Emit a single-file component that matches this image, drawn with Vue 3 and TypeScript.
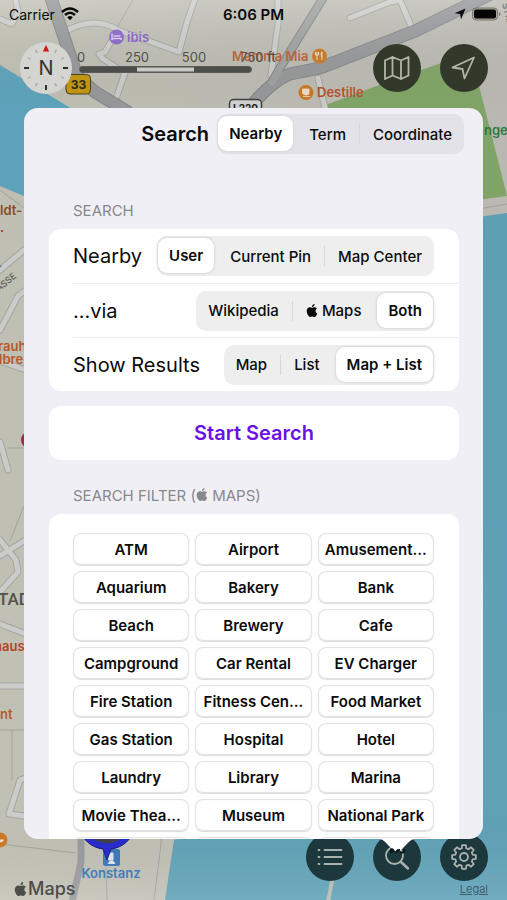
<script setup lang="ts">
import { ref } from 'vue'

interface SegmentOption {
  value: string
  label: string
  apple?: boolean
}

const modes: SegmentOption[] = [
  { value: 'nearby', label: 'Nearby' },
  { value: 'term', label: 'Term' },
  { value: 'coordinate', label: 'Coordinate' },
]
const mode = ref('nearby')

const rows = ref([
  {
    id: 'origin',
    title: 'Nearby',
    selected: 'user',
    options: [
      { value: 'user', label: 'User' },
      { value: 'pin', label: 'Current Pin' },
      { value: 'center', label: 'Map Center' },
    ] as SegmentOption[],
  },
  {
    id: 'source',
    title: '...via',
    selected: 'both',
    options: [
      { value: 'wikipedia', label: 'Wikipedia' },
      { value: 'maps', label: 'Maps', apple: true },
      { value: 'both', label: 'Both' },
    ] as SegmentOption[],
  },
  {
    id: 'results',
    title: 'Show Results',
    selected: 'both',
    options: [
      { value: 'map', label: 'Map' },
      { value: 'list', label: 'List' },
      { value: 'both', label: 'Map + List' },
    ] as SegmentOption[],
  },
])

const filters: string[] = [
  'ATM', 'Airport', 'Amusement...',
  'Aquarium', 'Bakery', 'Bank',
  'Beach', 'Brewery', 'Cafe',
  'Campground', 'Car Rental', 'EV Charger',
  'Fire Station', 'Fitness Cen...', 'Food Market',
  'Gas Station', 'Hospital', 'Hotel',
  'Laundry', 'Library', 'Marina',
  'Movie Thea...', 'Museum', 'National Park',
  'Nightlife', 'Park', 'Parking',
]

const applePath =
  'M12.152 6.896c-.948 0-2.415-1.078-3.96-1.04-2.04.027-3.91 1.183-4.961 3.014-2.117 3.675-.546 9.103 1.519 12.09 1.013 1.454 2.208 3.09 3.792 3.039 1.52-.065 2.09-.987 3.935-.987 1.831 0 2.35.987 3.96.948 1.637-.026 2.676-1.48 3.676-2.948 1.156-1.688 1.636-3.325 1.662-3.415-.039-.013-3.182-1.221-3.22-4.857-.026-3.04 2.48-4.494 2.597-4.559-1.429-2.09-3.623-2.324-4.39-2.376-2-.156-3.675 1.09-4.61 1.09zM15.53 3.83c.843-1.012 1.4-2.427 1.245-3.83-1.207.052-2.662.805-3.532 1.818-.78.896-1.454 2.338-1.273 3.714 1.338.104 2.715-.688 3.559-1.701'

// Eight-tooth gear outline centred on 0,0
function gearPath(outer: number, inner: number): string {
  const points: string[] = []
  const offsets: [number, number][] = [[-15, inner], [-9, outer], [9, outer], [15, inner]]
  for (let tooth = 0; tooth < 8; tooth++) {
    for (const [offset, radius] of offsets) {
      const angle = ((tooth * 45 + offset) * Math.PI) / 180
      points.push(`${(Math.cos(angle) * radius).toFixed(2)} ${(Math.sin(angle) * radius).toFixed(2)}`)
    }
  }
  return `M${points.join('L')}Z`
}
const gear = gearPath(12, 9)

const ticks = Array.from({ length: 12 }, (_, i) => i * 30)
</script>

<template>
  <div class="screen">
    <svg class="map" viewBox="0 0 507 900" preserveAspectRatio="xMidYMid slice" aria-hidden="true">
      <defs>
        <linearGradient id="land" x1="0" y1="0" x2="1" y2="0">
          <stop offset="0" stop-color="#c4c4b8" />
          <stop offset="1" stop-color="#bfbdb6" />
        </linearGradient>
        <linearGradient id="shade" x1="0" y1="0" x2="0" y2="1">
          <stop offset="0" stop-color="#fff" stop-opacity=".16" />
          <stop offset=".12" stop-color="#000" stop-opacity=".03" />
          <stop offset=".9" stop-color="#000" stop-opacity=".02" />
          <stop offset="1" stop-color="#fff" stop-opacity=".1" />
        </linearGradient>
      </defs>
      <rect width="507" height="900" fill="url(#land)" />
      <path d="M0 65 72 109 110 220 24 196 0 186Z" fill="#60a7bf" />
      <path d="M174 840 165 900H507V213L400 228V760Z" fill="#62a4ba" />
      <path d="M323 106 395 79 450 60 472 58 507 196 470 201Z" fill="#84a96a" />
      <g fill="none" stroke-linecap="round" stroke-linejoin="round">
        <g stroke="#a9a9a5" stroke-width="7">
          <path d="M196-4 187 22 179 52 118 30 105 52 99 54 103 59 125 73 114 104M68 30Q95 16 118 30M0 19 12 24 18 12 15-4" />
          <path d="M350 18 390 2 400 0 412 28M278-4V24L271 75M318 78 325 108M393 0 382-6" />
          <path d="M0 270 24 250M0 330 18 296 26 290M0 361 26 370M0 442 8 470M0 556 24 541M0 540 16 560 18 572 0 592M0 624 26 634M9 814 20 780 26 778M9 814 24 816M0 686H26" />
        </g>
        <g stroke="#d0d0ce" stroke-width="5">
          <path d="M196-4 187 22 179 52 118 30 105 52 99 54 103 59 125 73 114 104M68 30Q95 16 118 30M0 19 12 24 18 12 15-4" />
          <path d="M350 18 390 2 400 0 412 28M278-4V24L271 75M318 78 325 108M393 0 382-6" />
          <path d="M0 270 24 250M0 330 18 296 26 290M0 361 26 370M0 442 8 470M0 556 24 541M0 540 16 560 18 572 0 592M0 624 26 634M9 814 20 780 26 778M9 814 24 816M0 686H26" />
        </g>
        <g stroke="#a6a6a1" stroke-width="1">
          <path d="M134-2 118 26M10 541 24 506M8 448H24M0 730H24M12 730V780M0 844 76 853M107 900 106 868M0 190 24 208M161 838V844L154 900M507 204 484 208" />
        </g>
        <path d="M332 881 328 902" stroke="#b7bcb3" stroke-width="4" />
        <g stroke="#85888a" stroke-width="13" stroke-linejoin="miter">
          <path d="M50-5 77 76 95 92 128 112M507-14 415 31 320 68 290 74Q270 82 248 110" />
        </g>
        <path d="M325-5 280 68 272 82" stroke="#85888a" stroke-width="9" />
        <g stroke="#999b9d" stroke-width="11">
          <path d="M50-5 77 76 95 92 128 112M507-14 415 31 320 68 290 74Q270 82 248 110" />
        </g>
        <path d="M325-5 280 68 272 82" stroke="#a3a5a5" stroke-width="7" />
        <path d="M81 838V862L72 902" stroke="#9c9da0" stroke-width="7" />
      </g>
      <g class="place">
        <circle cx="116.500" cy="37" r="7.500" fill="#8c67cc" />
        <path d="M112 33.500V40M112 38.500H121V40M113.500 36H120.500" stroke="#ddd0f2" stroke-width="1.500" fill="none" />
        <text x="127" y="42" fill="#8961cc">ibis</text>
        <text x="232" y="61" fill="#be6433">Mamma Mia</text>
        <circle cx="319.500" cy="56" r="7.500" fill="#d07b27" />
        <path d="M317 52V60M315.500 52V55H318.500V52M322 60V52Q320 54 322 57" stroke="#f1e2cc" stroke-width="1" fill="none" />
        <circle cx="306" cy="92.500" r="7.500" fill="#d07b27" />
        <path d="M302.500 89H309V93Q309 95 306 95T302.500 93ZM303 96.500H310" fill="#f1e2cc" stroke="#f1e2cc" stroke-width=".8" />
        <text x="317" y="97" fill="#b8562a">Destille</text>
        <text x="484" y="135" fill="#2f7c3f">nge</text>
        <text x="0" y="215" fill="#8d4e2c">ldt-</text>
        <text x="0" y="232" fill="#a8392c">.</text>
        <text x="-2" y="351" fill="#bb5c2d">rauh</text>
        <text x="-1" y="364" fill="#bb5c2d">lbre</text>
        <text x="-6" y="651" fill="#b94520">haus</text>
        <text x="0" y="719" fill="#b5622e">nt</text>
      </g>
      <text class="district" x="-2" y="605">TAD</text>
      <g class="street">
        <text transform="translate(-1 292) rotate(-40)">ASSE</text>
        <text transform="translate(-2 269) rotate(-40)">E</text>
        <text transform="translate(502 4) rotate(75)">STRA</text>
      </g>
      <circle cx="29" cy="440" r="8" fill="#a62c3e" />
      <circle cx="0" cy="840" r="7.500" fill="#d07b27" />
      <path d="M-2 841Q2 838 4 840 2 844-2 841Z" fill="#f1e2cc" />
      <g>
        <rect x="66" y="74.500" width="24.500" height="19.500" rx="4" fill="#c69a10" stroke="#4b4122" />
        <text class="shield" x="78.500" y="89">33</text>
        <rect x="229.500" y="99.500" width="32" height="18" rx="4" fill="#d6d6d2" stroke="#3f4040" stroke-width="1.500" />
        <text class="plate" x="245.500" y="112">L220</text>
      </g>
      <rect x="103" y="849" width="17" height="17" rx="2" fill="#3b78bd" />
      <path d="M108.500 853H113V860H108.500ZM108 864 110 861H113L115 864" fill="#dfe8f2" stroke="#dfe8f2" stroke-width="1" />
      <path d="M80 828A27 24 0 0 0 103 849L107 860 111 849A27 24 0 0 0 134 828Z" fill="#2528d4" stroke="#15177b" />
      <path d="M88 835Q107 852 126 835Z" fill="#3e3f4c" />
      <text class="station" x="111" y="878">Konstanz</text>
      <rect width="507" height="900" fill="url(#shade)" />
    </svg>

    <header class="status">
      <span class="carrier">
        Carrier
        <svg width="18" height="14" viewBox="0 0 18 14" aria-hidden="true">
          <g fill="none" stroke="#0b0b0a" stroke-width="2.500">
            <path d="M1 5Q9-2 17 5M4 8Q9 3.500 14 8" />
          </g>
          <path d="M6.200 10.200Q9 8 11.800 10.200L9 13.200Z" fill="#0b0b0a" />
        </svg>
      </span>
      <time class="clock">6:06 PM</time>
      <span class="power">
        <svg width="12" height="12" viewBox="0 0 12 12" aria-hidden="true">
          <path d="M11.500.5 7 11.500 6.200 6 .5 5.200Z" fill="#0b0b0a" />
        </svg>
        <svg width="29" height="14" viewBox="0 0 29 14" aria-hidden="true">
          <rect x=".5" y="1" width="25" height="12" rx="3.500" fill="#aaa9a0" stroke="#77776f" />
          <rect x="2" y="2.500" width="22" height="9" rx="2" fill="#050505" />
          <path d="M27 5V9Q28.500 8.500 28.500 7T27 5Z" fill="#77776f" />
        </svg>
      </span>
    </header>

    <div class="tools">
      <button class="compass" type="button" aria-label="Compass">
        <svg width="52" height="52" viewBox="-26 -26 52 52" aria-hidden="true">
          <circle r="26" fill="#d4d4d0" />
          <g stroke="#a5a5a2" stroke-width="1.300">
            <path v-for="t in ticks" :key="t" d="M0-21V-17.500" :transform="`rotate(${t})`" />
          </g>
          <path d="M-22 0H-17M17 0H22M0 17V22" stroke="#30302e" stroke-width="2" />
          <path d="M0-23 3.200-16.500H-3.200Z" fill="#cf1616" />
          <text class="north" x="0" y="7">N</text>
        </svg>
      </button>
      <svg class="scale" width="206" height="36" viewBox="0 0 206 36" role="img" aria-label="Map scale">
        <g class="scale-text">
          <text x="9" y="15">0</text>
          <text x="65" y="15">250</text>
          <text x="122" y="15">500</text>
          <text x="186" y="15">750 ft</text>
        </g>
        <rect x="7.500" y="19.500" width="172" height="6" rx="3" fill="#4c4e4a" stroke="#5a5b57" />
        <rect x="65" y="20.500" width="57" height="4" fill="#cbcbc6" />
      </svg>
      <div class="tool-buttons">
        <button class="round olive" type="button" aria-label="Map style">
          <svg width="28" height="28" viewBox="-14 -14 28 28" aria-hidden="true">
            <path d="M-12-7.500-4.500-11 4-7.500 11.500-11V7.500L4 11-4.500 7.500-12 11ZM-4.500-11V7.500M4-7.500V11" />
          </svg>
        </button>
        <button class="round olive" type="button" aria-label="Show my location">
          <svg width="28" height="28" viewBox="-14 -14 28 28" aria-hidden="true">
            <path d="M10-10.500-11.500-.5-1.500 1 .5 10.500Z" />
          </svg>
        </button>
      </div>
    </div>

    <main class="popover">
      <div class="sheet">
        <div class="title-bar">
          <h1>Search</h1>
          <div class="segmented on-sheet" role="radiogroup" aria-label="Search mode">
            <label v-for="o in modes" :key="o.value" class="segment" :class="{ on: mode === o.value }">
              <input v-model="mode" type="radio" name="mode" :value="o.value" />
              <span>{{ o.label }}</span>
            </label>
          </div>
        </div>

        <h2>SEARCH</h2>
        <section class="card">
          <div v-for="row in rows" :key="row.id" class="row">
            <span :id="row.id" class="row-title">{{ row.title }}</span>
            <div class="segmented" role="radiogroup" :aria-labelledby="row.id">
              <label
                v-for="o in row.options"
                :key="o.value"
                class="segment"
                :class="{ on: row.selected === o.value }"
              >
                <input v-model="row.selected" type="radio" :name="row.id" :value="o.value" />
                <svg v-if="o.apple" class="apple" width="12" height="13" viewBox="1 0 22 24" aria-hidden="true">
                  <path :d="applePath" />
                </svg>
                <span>{{ o.label }}</span>
              </label>
            </div>
          </div>
        </section>

        <button class="card start" type="button">Start Search</button>

        <h2 class="filter-title">
          SEARCH FILTER (<svg class="apple" width="12" height="13" viewBox="1 0 22 24" aria-hidden="true">
            <path :d="applePath" />
          </svg>
          MAPS)
        </h2>
        <section class="card filters">
          <button v-for="name in filters" :key="name" class="chip" type="button">{{ name }}</button>
        </section>
      </div>
      <svg class="pointer" width="34" height="16" viewBox="0 0 34 16" aria-hidden="true">
        <path d="M0 0H34C30 1 28 4 25 7 21 11 21 12 17 12S13 11 9 7C6 4 4 1 0 0Z" fill="#fff" />
        <path d="M11 14V10.500Q13.500 9.500 13.500 13.500M17 14Q16 10.500 20 11M20 13.500H23L25 10.500" fill="none" stroke="#0c1614" stroke-width="2" />
      </svg>
    </main>

    <footer class="bottom">
      <span class="brand">
        <svg class="apple" width="13" height="14" viewBox="1 0 22 24" aria-hidden="true">
          <path :d="applePath" />
        </svg>Maps
      </span>
      <div class="actions">
        <div class="tool-buttons">
          <button class="round teal" type="button" aria-label="List">
            <svg width="28" height="28" viewBox="-14 -14 28 28" aria-hidden="true">
              <path d="M-5.500-7H11.500M-5.500 0H11.500M-5.500 7H11.500M-11.500-7H-10.500M-11.500 0H-10.500M-11.500 7H-10.500" />
            </svg>
          </button>
          <button class="round teal" type="button" aria-label="Search">
            <svg width="28" height="28" viewBox="-14 -14 28 28" aria-hidden="true">
              <circle cx="-2.500" cy="-1.500" r="8.500" />
              <path d="M4 5 11 11.500" stroke-width="2.500" />
            </svg>
          </button>
          <button class="round teal" type="button" aria-label="Settings">
            <svg width="28" height="28" viewBox="-14 -14 28 28" aria-hidden="true">
              <path :d="gear" />
              <circle r="4" />
            </svg>
          </button>
        </div>
        <a class="legal" href="#legal">Legal</a>
      </div>
    </footer>
  </div>
</template>

<style>
body {
  margin: 0;
}
</style>

<style scoped>
.screen {
  position: relative;
  display: flex;
  flex-direction: column;
  height: 100vh;
  overflow: hidden;
  font-family: Inter, "Liberation Sans", sans-serif;
  color: #0b0b0c;
}
.map {
  position: absolute;
  inset: 0;
  width: 100%;
  height: 100%;
}
.place text {
  font-size: 13px;
  font-weight: 600;
}
.district {
  font-family: Roboto, sans-serif;
  font-size: 17px;
  font-weight: 500;
  fill: #55554f;
}
.street text {
  font-size: 9px;
  font-weight: 500;
  fill: #60605b;
}
.shield,
.plate,
.station {
  font-weight: 700;
  text-anchor: middle;
}
.shield {
  font-size: 12px;
  fill: #302a12;
}
.plate {
  font-size: 10px;
  fill: #222;
}
.station {
  font-size: 13px;
  font-weight: 600;
  fill: #3978bb;
}
button {
  margin: 0;
  border: 0;
  padding: 0;
  font: inherit;
  color: inherit;
}
.status {
  position: relative;
  display: grid;
  grid-template-columns: 1fr auto 1fr;
  align-items: center;
  height: 28px;
  margin-bottom: 14px;
  padding: 0 9px;
  font-size: 14px;
}
.carrier,
.power {
  display: flex;
  align-items: center;
  gap: 6px;
}
.power {
  justify-content: flex-end;
  margin-right: -3px;
}
.clock {
  font-size: 15px;
  font-weight: 600;
}
.tools {
  position: relative;
  display: flex;
  align-items: center;
  height: 52px;
  margin-bottom: 14px;
  padding: 0 19px 0 20px;
}
.compass {
  display: flex;
  border-radius: 50%;
  background: none;
}
.north {
  font-size: 20px;
  text-anchor: middle;
  fill: #333;
}
.scale {
  flex: none;
  align-self: flex-start;
  padding-top: 5px;
}
.scale-text text {
  font-size: 13px;
  text-anchor: middle;
  fill: #50514d;
}
.tool-buttons {
  display: flex;
  gap: 19px;
  margin-left: auto;
}
.round {
  display: flex;
  align-items: center;
  justify-content: center;
  width: 48px;
  height: 48px;
  border-radius: 50%;
}
.round svg {
  fill: none;
  stroke: #b3b5ab;
  stroke-width: 1.8;
  stroke-linejoin: round;
  stroke-linecap: round;
}
.olive {
  background: #33392a;
}
.teal {
  background: #1d383c;
}
.teal svg {
  stroke: #a9b1ae;
}
.popover {
  position: relative;
  z-index: 1;
  flex: 1;
  min-height: 0;
  margin: 0 24px;
}
.sheet {
  box-sizing: border-box;
  height: 100%;
  overflow: hidden;
  padding: 6px 24px 0 25px;
  border-radius: 14px;
  background: #f0eff5;
}
.pointer {
  position: absolute;
  right: 69px;
  top: 100%;
}
.title-bar {
  display: flex;
  align-items: center;
  justify-content: flex-end;
  gap: 8px;
  margin: 0 -5px 46px 0;
}
h1 {
  margin: 0;
  font-size: 20px;
  font-weight: 600;
}
h2 {
  margin: 0;
  padding: 0 24px 8px;
  font-size: 15px;
  font-weight: 400;
  line-height: 21px;
  color: #88888d;
}
.filter-title {
  padding-top: 25px;
}
.apple {
  fill: currentColor;
}
.segmented {
  box-sizing: border-box;
  display: flex;
  gap: 5px;
  height: 40px;
  padding: 1px;
  border-radius: 10px;
  background: #eeeeef;
}
.on-sheet {
  background: #e3e2e8;
}
.segment {
  position: relative;
  display: flex;
  align-items: center;
  gap: 4px;
  padding: 0 11px;
  border-radius: 9px;
  font-size: 15px;
  font-weight: 500;
  white-space: nowrap;
}
.segment input {
  position: absolute;
  inset: 0;
  width: 100%;
  height: 100%;
  margin: 0;
  opacity: 0;
}
.segment.on {
  margin: 1px 0 2px;
  background: #fff;
  font-weight: 600;
  box-shadow: 0 0 2px 1px #d8d8da;
}
.segment:not(.on) + .segment:not(.on)::before {
  content: "";
  position: absolute;
  left: -3px;
  top: 9px;
  bottom: 9px;
  width: 1px;
  background: #d6d6d9;
}
.card {
  border-radius: 12px;
  background: #fff;
}
.row {
  display: flex;
  align-items: center;
  justify-content: space-between;
  height: 54px;
  margin-left: 24px;
  padding-right: 25px;
  box-sizing: border-box;
}
.row + .row {
  border-top: 1px solid #ebebed;
}
.row-title {
  font-size: 20px;
}
.start {
  display: block;
  width: 100%;
  height: 54px;
  margin-top: 15px;
  font-size: 20px;
  font-weight: 600;
  color: #6a12e6;
}
.filters {
  display: grid;
  grid-template-columns: repeat(3, minmax(0, 1fr));
  gap: 6px;
  padding: 19px 25px 19px 24px;
}
.chip {
  height: 32px;
  border-radius: 8px;
  background: #fff;
  box-shadow: inset 0 0 1px 1px #e0e0e3, 0 1px 1px #dcdcdf;
  font-size: 15px;
  font-weight: 600;
  white-space: nowrap;
}
.bottom {
  position: relative;
  display: flex;
  align-items: flex-end;
  justify-content: space-between;
  height: 67px;
  margin-top: -6px;
  padding: 0 19px 0 14px;
}
.brand {
  display: flex;
  align-items: center;
  gap: 1px;
  padding-bottom: 1px;
  font-size: 18px;
  font-weight: 500;
  color: #4d4d49;
}
.actions {
  display: flex;
  flex-direction: column;
  align-items: flex-end;
  height: 100%;
}
.legal {
  font-size: 11px;
  line-height: 16px;
  color: #3d606d;
}
</style>
